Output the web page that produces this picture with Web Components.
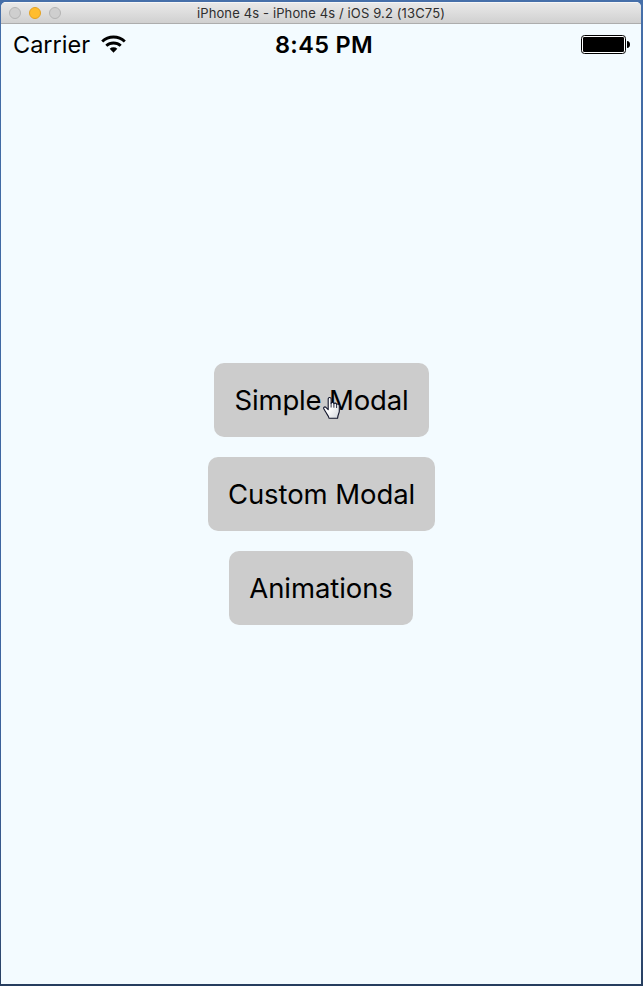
<!DOCTYPE html>
<html lang="en"><head><meta charset="utf-8"><title>iPhone 4s</title>
<style>
html,body{margin:0;height:100%;overflow:hidden}
body{font-family:Inter,"Liberation Sans",sans-serif;color:#000}
</style></head>
<body>
<simulator-window>
  <window-titlebar slot="title">iPhone 4s - iPhone 4s / iOS 9.2 (13C75)</window-titlebar>
  <phone-status carrier="Carrier" time="8:45 PM"></phone-status>
  <button-stack>
    <modal-button style="--w:215px;letter-spacing:-.16px">Simple Modal<hand-cursor slot="cursor"></hand-cursor></modal-button>
    <modal-button style="--w:227px">Custom Modal</modal-button>
    <modal-button style="--w:184px;margin-right:1px">Animations</modal-button>
  </button-stack>
</simulator-window>
<script>
const define = (name, html, after) => customElements.define(name, class extends HTMLElement {
  constructor() {
    super();
    this.attachShadow({mode: 'open'}).innerHTML = html;
  }
  connectedCallback() { if (after) after(this); }
});

define('simulator-window', `<style>
:host{display:block;box-sizing:border-box;width:643px;height:986px;padding:2px 2px 2px 1px;background:linear-gradient(#466fa9 0,#416ba5 12%,#3c64a0 70%,#345280 94%,#263d5e 100%)}
.frame{display:flex;flex-direction:column;height:100%;border-radius:5px 5px 0 0;overflow:hidden;background:#f3fbff}
</style><div class="frame"><slot name="title"></slot><slot></slot></div>`);

define('window-titlebar', `<style>
:host{display:grid;grid-template-columns:1fr auto 1fr;align-items:center;box-sizing:border-box;height:22px;flex:none;background:linear-gradient(#e8e8e8,#dedede 45%,#d0d0d0);border-top:1px solid #f6f6f6;border-bottom:1px solid #adadad;font-size:13px;color:#2e2e2e}
.lights{display:flex;gap:8px;padding-left:8px}
i{box-sizing:border-box;width:12px;height:12px;border-radius:50%;background:#cfcfcf;border:1px solid #b4b4b4}
i.min{background:#ffbd2e;border-color:#e3a123}
.text{white-space:nowrap;letter-spacing:.13px}
</style><div class="lights"><i></i><i class="min"></i><i></i></div><div class="text"><slot></slot></div><div></div>`);

define('phone-status', `<style>
:host{display:grid;grid-template-columns:1fr auto 1fr;align-items:center;height:42px;flex:none;padding:0 11px 0 12px;font-size:23.5px;line-height:28px}
.left{display:flex;align-items:center;gap:11px}
.left svg{margin-top:-2px}
.time{font-weight:600;letter-spacing:.35px;padding-left:5px}
.right{display:flex;justify-content:flex-end}
svg{display:block}
</style>
<div class="left"><span class="carrier"></span>
<svg width="25" height="18" viewBox="0 0 25 18"><g fill="none" stroke="#000" stroke-width="2.9"><path d="M1.2 6.5a16.3 16.3 0 0 1 22.6 0"/><path d="M5.3 10.8a10.5 10.5 0 0 1 14.4 0"/></g><path d="M8.7 13.7a5.6 5.6 0 0 1 7.6 0L12.5 17.8z"/></svg></div>
<div class="time"></div>
<div class="right"><svg width="49" height="20" viewBox="0 0 49 20"><rect x=".5" y=".5" width="44" height="18" rx="3" fill="#fff" stroke="#000"/><rect x="2" y="2" width="41" height="15" rx="1.3"/><path d="M46 6q3 .4 3 3.5t-3 3.5z"/></svg></div>`,
el => {
  el.shadowRoot.querySelector('.carrier').textContent = el.getAttribute('carrier');
  el.shadowRoot.querySelector('.time').textContent = el.getAttribute('time');
});

define('button-stack', `<style>
:host{display:flex;flex:1;flex-direction:column;align-items:center;justify-content:center;gap:20px;padding-bottom:62px;padding-left:1px}
</style><slot></slot>`);

define('modal-button', `<style>
:host{position:relative;display:flex;align-items:center;justify-content:center;width:var(--w);height:74px;border-radius:10px;background:#ccc;font-size:27.5px;line-height:34px;letter-spacing:-.08px;white-space:nowrap}
</style><slot></slot><slot name="cursor"></slot>`);

define('hand-cursor', `<style>
:host{position:absolute;left:109px;top:34px;width:18px;height:22px}
svg{display:block}
</style><svg width="18" height="22" viewBox="0 0 18 22"><defs><linearGradient id="g" x2="1" y2="1"><stop offset=".45" stop-color="#fff"/><stop offset="1" stop-color="#d2d6dc"/></linearGradient></defs><path d="M5.2 12.7V2.1C5.2 0 8.1 0 8.1 2.1V6.2C8.5 5.1 10.7 5.2 10.9 6.6C11.5 5.7 13.4 6 13.6 7.4C14.4 6.7 16.3 7.2 16.3 9V14.2C16.3 16.4 14.6 18 14.6 21.2H6C5.7 18.7 3.8 17.2 2.4 14.6L.8 11.7C.2 10.4 1.6 9.4 2.9 10.3L5.2 12.7Z" fill="url(#g)" stroke="#11152b" stroke-width="1.1" stroke-linejoin="round"/><path d="M8.1 5.8V10.5M10.9 6.6V10.7M13.6 7.4V11" stroke="#11152b" stroke-width=".9" fill="none"/></svg>`);
</script></body></html>
